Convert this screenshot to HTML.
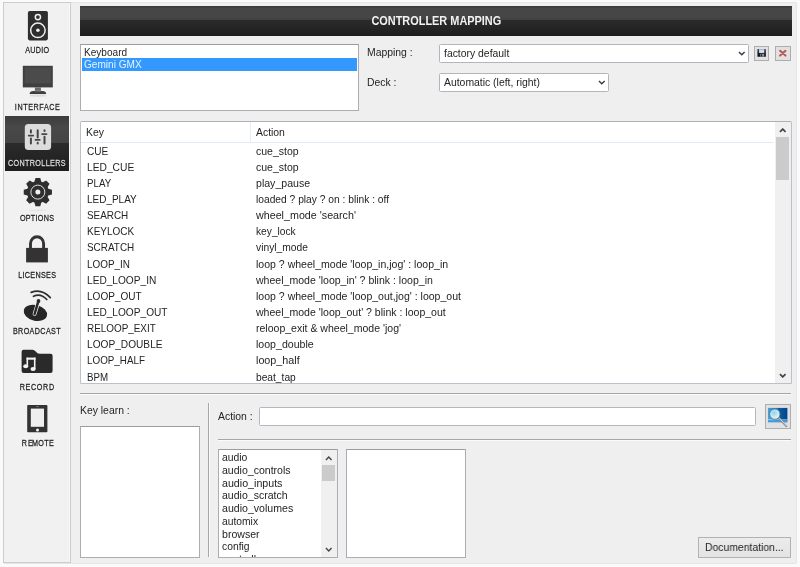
<!DOCTYPE html>
<html><head><meta charset="utf-8"><title>Controller Mapping</title>
<style>
html,body{margin:0;padding:0;}
body{width:800px;height:567px;overflow:hidden;background:#fafafa;font-family:"Liberation Sans",sans-serif;font-size:11px;color:#242424;position:relative;}
#frame{position:absolute;left:3px;top:1.5px;width:793.5px;height:562px;background:#efefef;border:1px solid #e5e5e5;border-radius:2px;box-sizing:border-box;}
#c{position:absolute;left:0;top:0;width:800px;height:567px;will-change:transform;}
#c > *{position:absolute;}
.t{display:inline-block;transform:scaleX(.945);transform-origin:0 50%;white-space:nowrap;}
#side{left:3px;top:1.5px;width:68.4px;height:561.2px;border:1.2px solid #c9ccd1;box-sizing:border-box;background:#f1f1f1;box-shadow:inset -1px 0 0 #f8f8f8;}
#side > *{position:absolute;}
#title{left:80px;top:6px;width:712px;height:29.5px;background:linear-gradient(#363636 0%,#474747 9%,#464646 36%,#404040 46%,#2b2b2b 48%,#232323 80%,#1d1d1d 100%);color:#f2f2f2;text-align:center;font-weight:bold;font-size:12px;line-height:31px;}
#title span{display:inline-block;transform:scaleX(.91);}
.box{background:#fff;border:1px solid #abadb3;border-top-color:#9a9ca3;box-sizing:border-box;overflow:hidden;}
.box > *{position:absolute;}
#devlist{left:80px;top:44px;width:278.6px;height:67.4px;}
.li{left:0.7px;right:0.7px;height:12.6px;line-height:12.6px;padding-left:2.5px;}
.li .t{transform:scaleX(.915);}
.li.sel{background:#3399ff;color:#eaf3ff;}
.lbl{line-height:13px;height:13px;}
.combo{background:#fff;border:1px solid #b2b5bd;border-radius:1.5px;box-sizing:border-box;line-height:17px;padding-left:4.2px;}
.combo .chev{position:absolute;right:2.2px;top:6.2px;width:7.6px;height:4.8px;}
.chev path{fill:none;stroke:#3c3c3c;stroke-width:1.5;}
#table{left:80px;top:120.7px;width:712px;height:263.4px;border-color:#bcc0c8;border-top-color:#adb1b9;border-radius:1.5px;}
#thead{left:0;top:0;right:17px;height:20.5px;border-bottom:1px solid #e2eaf5;background:#fff;}
.th{position:absolute;top:0;height:20.5px;line-height:21px;padding-left:5.2px;box-sizing:border-box;border-right:1px solid #e8eef6;}
.tr{left:0;right:17px;height:16px;line-height:16px;}
.tr .k{position:absolute;left:5.9px;transform:scaleX(.935);}
.tr .a{position:absolute;left:175.2px;}
.sb{position:absolute;width:15.8px;background:#f0f0f0;}
.sb .arr{position:absolute;left:4px;width:7.5px;height:5px;}
.arr path{fill:none;stroke:#444;stroke-width:1.8;}
.sb .thumb{position:absolute;left:1.1px;right:1.7px;background:#cbcbcb;}
.hr{height:0;border-top:1px solid #a6a6a6;border-bottom:1px solid #fbfbfb;}
.vr{width:0;border-left:1px solid #a6a6a6;border-right:1px solid #fbfbfb;}
#cats .ci{left:3px;height:12.7px;line-height:12.7px;}
#cats .t{transform:scaleX(.962);}
#cats .arr path{stroke-width:1.5;}
#doc{left:698px;top:537px;width:93px;height:20.5px;box-sizing:border-box;border:1px solid #b2b2b2;background:linear-gradient(#ececec,#e3e3e3);line-height:18.5px;padding-left:5.8px;}
#selblk{left:5px;top:115.5px;width:64.3px;height:55.5px;background:linear-gradient(#3c3c3c 0%,#484848 20%,#444 49%,#2b2b2b 50%,#1e1e1e 100%);}
#icons{left:0;top:0;}
.sbtn{box-sizing:border-box;border:1px solid #adadad;background:#e1e1e1;overflow:hidden;}

</style></head>
<body>
<div id="frame"></div>
<div id="c">
<div id="side"></div>
<div id="selblk"></div>
<svg id="icons" width="76" height="567" viewBox="0 0 76 567">
<!-- AUDIO speaker -->
<rect x="27.9" y="11" width="20" height="29.4" rx="1.8" fill="#2e2e2e"/>
<circle cx="37.9" cy="17.1" r="2.6" fill="#2e2e2e" stroke="#f0f0f0" stroke-width="1.5"/>
<circle cx="37.9" cy="30.3" r="7.25" fill="#2e2e2e" stroke="#f0f0f0" stroke-width="1.5"/>
<circle cx="37.9" cy="30.3" r="1.8" fill="#f0f0f0"/>
<!-- INTERFACE monitor -->
<rect x="22.8" y="65.8" width="30" height="21.6" fill="#3f3f3f"/>
<rect x="24.6" y="67.4" width="26.4" height="16" fill="#4b4b4b"/>
<rect x="34.9" y="87.4" width="6" height="4" fill="#6a6a6a"/>
<path d="M29.6 94 Q29.6 90.9 33.5 90.9 L42.3 90.9 Q46.2 90.9 46.2 94 Z" fill="#3f3f3f"/>
<rect x="34.9" y="90" width="6" height="1.6" fill="#777"/>
<path d="M30 94.6 h16 v1.6 q-8 1.2 -16 0 z" fill="#d4d4d4" opacity=".7"/>
<!-- CONTROLLERS -->
<rect x="24.8" y="124.1" width="26.3" height="26" rx="3.6" fill="#dcdcdc"/>
<g stroke="#454545" stroke-linecap="round" fill="none">
<path d="M30.9 130.3 V132.6 M30.9 138.4 V143.4 M37.7 130.3 V137.4 M37.7 142.7 V143.4 M44.5 130.3 V130.9 M44.5 136.8 V143.4" stroke-width="2"/>
<path d="M28.7 135.6 H33.2 M35.5 139.9 H39.7 M42.1 134.1 H46.5" stroke-width="1.8"/>
</g>
<!-- OPTIONS gear -->
<g transform="translate(37.85 192.1)" fill="#2f2f2f">
<circle r="10.9"/>
<g transform="rotate(0)"><path d="M-3.7 -9.5 L-2.4 -14.1 L2.4 -14.1 L3.7 -9.5 Z"/></g><g transform="rotate(45)"><path d="M-3.7 -9.5 L-2.4 -14.1 L2.4 -14.1 L3.7 -9.5 Z"/></g><g transform="rotate(90)"><path d="M-3.7 -9.5 L-2.4 -14.1 L2.4 -14.1 L3.7 -9.5 Z"/></g><g transform="rotate(135)"><path d="M-3.7 -9.5 L-2.4 -14.1 L2.4 -14.1 L3.7 -9.5 Z"/></g><g transform="rotate(180)"><path d="M-3.7 -9.5 L-2.4 -14.1 L2.4 -14.1 L3.7 -9.5 Z"/></g><g transform="rotate(225)"><path d="M-3.7 -9.5 L-2.4 -14.1 L2.4 -14.1 L3.7 -9.5 Z"/></g><g transform="rotate(270)"><path d="M-3.7 -9.5 L-2.4 -14.1 L2.4 -14.1 L3.7 -9.5 Z"/></g><g transform="rotate(315)"><path d="M-3.7 -9.5 L-2.4 -14.1 L2.4 -14.1 L3.7 -9.5 Z"/></g>
<circle r="7" fill="none" stroke="#f0f0f0" stroke-width=".9"/>
<circle r="2.5" fill="#f0f0f0"/>
</g>
<ellipse cx="37.9" cy="210.3" rx="9" ry="1.1" fill="#dcdcdc" opacity=".55"/>
<!-- LICENSES lock -->
<rect x="26.1" y="247.9" width="21.8" height="14.5" fill="#353233"/>
<path d="M30.5 248.5 V243.5 A6.55 6.8 0 0 1 43.6 243.5 V248.5" fill="none" stroke="#353233" stroke-width="2.9"/>
<!-- BROADCAST -->
<ellipse cx="35.4" cy="312.9" rx="11.9" ry="7.8" transform="rotate(14 35.4 312.9)" fill="#262626"/>
<path d="M34.6 314 L38.4 301.6" stroke="#f0f0f0" stroke-width="3.9" stroke-linecap="round"/>
<path d="M34.6 314 L38.4 301.2" stroke="#2b2b2b" stroke-width="2.5" stroke-linecap="round"/>
<circle cx="38.5" cy="301" r="1.9" fill="#2b2b2b"/>
<path d="M31.2 292.4 Q41.5 288.4 50.3 297.6" fill="none" stroke="#2e2e2e" stroke-width="1.7" stroke-linecap="round"/>
<path d="M33.5 296.3 Q40.5 292.8 46.8 299.5" fill="none" stroke="#2e2e2e" stroke-width="1.7" stroke-linecap="round"/>
<!-- RECORD folder -->
<path d="M23.6 349.7 H32.6 Q34 349.7 35.5 351.3 Q37.5 353.8 39.5 353.8 H50.6 Q52.6 353.8 52.6 355.8 V371.1 Q52.6 373.1 50.6 373.1 H23.6 Q21.6 373.1 21.6 371.1 V351.7 Q21.6 349.7 23.6 349.7 Z" fill="#2a2a2a"/>
<g fill="#f4f4f4">
<rect x="26.6" y="357.6" width="8.9" height="2.1"/>
<rect x="26.5" y="357.6" width="1.6" height="8.6"/>
<rect x="33.9" y="357.6" width="1.6" height="11.4"/>
<ellipse cx="25.7" cy="366.3" rx="2.5" ry="2"/>
<ellipse cx="33.1" cy="368.9" rx="2.6" ry="2"/>
</g>
<!-- REMOTE phone -->
<rect x="27.2" y="405.1" width="20.2" height="27.2" rx=".8" fill="#333"/>
<rect x="30.8" y="408.6" width="13.2" height="18.2" fill="#efefef"/>
<circle cx="37.5" cy="430.1" r="1.5" fill="#f4f4f4"/>
<rect x="36" y="406.4" width="3" height=".7" fill="#888"/>
<!-- labels -->
<g font-family="Liberation Sans, sans-serif" font-size="7.2" font-weight="normal" stroke-width=".22">
<text transform="translate(25.30 54.20) scale(1 1.17)" textLength="23.7" lengthAdjust="spacing" fill="#ffffff" stroke="#ffffff">AUDIO</text>
<text transform="translate(14.85 110.40) scale(1 1.17)" textLength="45" lengthAdjust="spacing" fill="#ffffff" stroke="#ffffff">INTERFACE</text>
<text transform="translate(19.90 222.20) scale(1 1.17)" textLength="34.1" lengthAdjust="spacing" fill="#ffffff" stroke="#ffffff">OPTIONS</text>
<text transform="translate(18.20 278.70) scale(1 1.17)" textLength="37.8" lengthAdjust="spacing" fill="#ffffff" stroke="#ffffff">LICENSES</text>
<text transform="translate(12.90 334.30) scale(1 1.17)" textLength="47.8" lengthAdjust="spacing" fill="#ffffff" stroke="#ffffff">BROADCAST</text>
<text transform="translate(19.80 390.30) scale(1 1.17)" textLength="34.3" lengthAdjust="spacing" fill="#ffffff" stroke="#ffffff">RECORD</text>
<text transform="translate(21.70 446.30) scale(1 1.17)" fill="#ffffff" stroke="#ffffff">R</text>
<text transform="translate(28.00 446.30) scale(1 1.17)" fill="#ffffff" stroke="#ffffff">E</text>
<text transform="translate(31.90 446.30) scale(1 1.17)" textLength="21.9" lengthAdjust="spacing" fill="#ffffff" stroke="#ffffff">MOTE</text>
<text transform="translate(25.30 53.40) scale(1 1.17)" textLength="23.7" lengthAdjust="spacing" fill="#222222" stroke="#222222">AUDIO</text>
<text transform="translate(14.85 109.60) scale(1 1.17)" textLength="45" lengthAdjust="spacing" fill="#222222" stroke="#222222">INTERFACE</text>
<text transform="translate(19.90 221.40) scale(1 1.17)" textLength="34.1" lengthAdjust="spacing" fill="#222222" stroke="#222222">OPTIONS</text>
<text transform="translate(18.20 277.90) scale(1 1.17)" textLength="37.8" lengthAdjust="spacing" fill="#222222" stroke="#222222">LICENSES</text>
<text transform="translate(12.90 333.50) scale(1 1.17)" textLength="47.8" lengthAdjust="spacing" fill="#222222" stroke="#222222">BROADCAST</text>
<text transform="translate(19.80 389.50) scale(1 1.17)" textLength="34.3" lengthAdjust="spacing" fill="#222222" stroke="#222222">RECORD</text>
<text transform="translate(21.70 445.50) scale(1 1.17)" fill="#222222" stroke="#222222">R</text>
<text transform="translate(28.00 445.50) scale(1 1.17)" fill="#222222" stroke="#222222">E</text>
<text transform="translate(31.90 445.50) scale(1 1.17)" textLength="21.9" lengthAdjust="spacing" fill="#222222" stroke="#222222">MOTE</text>
<text transform="translate(7.90 166.50) scale(1 1.17)" textLength="57.7" lengthAdjust="spacing" fill="#101010" stroke="#101010">CONTROLLERS</text>
<text transform="translate(7.90 165.80) scale(1 1.17)" textLength="57.7" lengthAdjust="spacing" fill="#dcdcdc" stroke="#dcdcdc">CONTROLLERS</text>
</g>
</svg>
<div id="title"><span>CONTROLLER MAPPING</span></div>
<div id="devlist" class="box"><div class="li" style="top:0.8px"><span class="t">Keyboard</span></div><div class="li sel" style="top:13.1px"><span class="t">Gemini GMX</span></div></div>
<div class="lbl" style="left:367px;top:45.5px"><span class="t">Mapping :</span></div>
<div class="combo" style="left:439.3px;top:44.2px;width:309.6px;height:19.1px"><span class="t">factory default</span><svg class="chev" viewBox="0 0 8 5"><path d="M1 1 L4 4 L7 1" /></svg></div>
<div class="lbl" style="left:367px;top:75.5px"><span class="t">Deck :</span></div>
<div class="combo" style="left:439.3px;top:73.2px;width:169.4px;height:19.2px"><span class="t">Automatic (left, right)</span><svg class="chev" viewBox="0 0 8 5"><path d="M1 1 L4 4 L7 1" /></svg></div>
<div class="sbtn" style="left:754.1px;top:46.1px;width:15px;height:14.7px">
<svg width="15" height="14.7" viewBox="754.1 46.1 15 14.7" style="position:absolute;left:-1px;top:-1px">
<defs><linearGradient id="fl" x1="0" y1="0" x2="0" y2="1"><stop offset="0" stop-color="#4a5263"/><stop offset=".55" stop-color="#1c2130"/><stop offset="1" stop-color="#0e1016"/></linearGradient></defs>
<rect x="757.5" y="49" width="8.5" height="7.8" rx=".5" fill="url(#fl)"/>
<rect x="759.2" y="49.3" width="5.1" height="3.7" fill="#dde5f2"/>
<rect x="759.2" y="49.3" width="5.1" height="1.2" fill="#aebbd2"/>
<rect x="760.3" y="53.9" width="4" height="2.9" fill="#8b8f97"/>
<rect x="761" y="54.4" width="1.2" height="2" fill="#20242e"/>
</svg></div>
<div class="sbtn" style="left:775.2px;top:46.1px;width:15.6px;height:14.7px">
<svg width="15.6" height="14.7" viewBox="775.2 46.1 15.6 14.7" style="position:absolute;left:-1px;top:-1px">
<path d="M780.3 50.9 L785.7 55.7 M785.7 50.9 L780.3 55.7" stroke="#b95552" stroke-width="2" stroke-linecap="round" fill="none"/>
</svg></div>
<div id="table" class="box">
<div id="thead"><div class="th" style="left:0;width:170px"><span class="t">Key</span></div><div class="th" style="left:170px;width:524px;border-right:none"><span class="t">Action</span></div></div>
<div class="tr" style="top:20.85px"><span class="t k" style="transform:scaleX(0.915)">CUE</span><span class="t a" style="transform:scaleX(0.956)">cue_stop</span></div>
<div class="tr" style="top:37.00px"><span class="t k" style="transform:scaleX(0.931)">LED_CUE</span><span class="t a" style="transform:scaleX(0.956)">cue_stop</span></div>
<div class="tr" style="top:53.15px"><span class="t k" style="transform:scaleX(0.885)">PLAY</span><span class="t a" style="transform:scaleX(0.961)">play_pause</span></div>
<div class="tr" style="top:69.30px"><span class="t k" style="transform:scaleX(0.907)">LED_PLAY</span><span class="t a" style="transform:scaleX(0.931)">loaded ? play ? on : blink : off</span></div>
<div class="tr" style="top:85.45px"><span class="t k" style="transform:scaleX(0.900)">SEARCH</span><span class="t a" style="transform:scaleX(0.974)">wheel_mode 'search'</span></div>
<div class="tr" style="top:101.60px"><span class="t k" style="transform:scaleX(0.909)">KEYLOCK</span><span class="t a" style="transform:scaleX(0.928)">key_lock</span></div>
<div class="tr" style="top:117.75px"><span class="t k" style="transform:scaleX(0.902)">SCRATCH</span><span class="t a" style="transform:scaleX(0.935)">vinyl_mode</span></div>
<div class="tr" style="top:133.90px"><span class="t k" style="transform:scaleX(0.902)">LOOP_IN</span><span class="t a" style="transform:scaleX(0.958)">loop ? wheel_mode 'loop_in,jog' : loop_in</span></div>
<div class="tr" style="top:150.05px"><span class="t k" style="transform:scaleX(0.921)">LED_LOOP_IN</span><span class="t a" style="transform:scaleX(0.958)">wheel_mode 'loop_in' ? blink : loop_in</span></div>
<div class="tr" style="top:166.20px"><span class="t k" style="transform:scaleX(0.914)">LOOP_OUT</span><span class="t a" style="transform:scaleX(0.958)">loop ? wheel_mode 'loop_out,jog' : loop_out</span></div>
<div class="tr" style="top:182.35px"><span class="t k" style="transform:scaleX(0.921)">LED_LOOP_OUT</span><span class="t a" style="transform:scaleX(0.958)">wheel_mode 'loop_out' ? blink : loop_out</span></div>
<div class="tr" style="top:198.50px"><span class="t k" style="transform:scaleX(0.900)">RELOOP_EXIT</span><span class="t a" style="transform:scaleX(0.957)">reloop_exit &amp; wheel_mode 'jog'</span></div>
<div class="tr" style="top:214.65px"><span class="t k" style="transform:scaleX(0.922)">LOOP_DOUBLE</span><span class="t a" style="transform:scaleX(0.962)">loop_double</span></div>
<div class="tr" style="top:230.80px"><span class="t k" style="transform:scaleX(0.895)">LOOP_HALF</span><span class="t a" style="transform:scaleX(0.978)">loop_half</span></div>
<div class="tr" style="top:246.95px"><span class="t k" style="transform:scaleX(0.885)">BPM</span><span class="t a" style="transform:scaleX(0.928)">beat_tap</span></div>
<div class="sb" style="right:0;top:0;bottom:0"><svg class="arr" style="top:6px" viewBox="0 0 8 5"><path d="M1 4 L4 1 L7 4"/></svg><div class="thumb" style="top:15.6px;height:42.7px"></div><svg class="arr" style="bottom:5px" viewBox="0 0 8 5"><path d="M1 1 L4 4 L7 1"/></svg></div>
</div>
<div class="hr" style="left:80px;top:392.9px;width:711px"></div>
<div class="lbl" style="left:80px;top:403.8px"><span class="t">Key learn :</span></div>
<div class="box" style="left:80px;top:425.5px;width:120px;height:132.3px"></div>
<div class="vr" style="left:207.5px;top:403px;height:154px"></div>
<div class="lbl" style="left:218px;top:409.5px"><span class="t">Action :</span></div>
<div class="box" style="left:259px;top:406.6px;width:496.8px;height:19px;border-color:#b4b7bf;border-radius:1.5px"></div>
<div class="sbtn" style="left:765.1px;top:404.1px;width:25.8px;height:24.9px">
<svg width="25.8" height="24.9" viewBox="765.1 404.1 25.8 24.9" style="position:absolute;left:-1px;top:-1px">
<defs>
<linearGradient id="gb" x1="0" y1="0" x2="1" y2="0"><stop offset="0" stop-color="#46a4de"/><stop offset=".5" stop-color="#1b79c4"/><stop offset="1" stop-color="#044a96"/></linearGradient>
<radialGradient id="gl" cx=".4" cy=".35" r=".75"><stop offset="0" stop-color="#8fd4f2"/><stop offset=".6" stop-color="#c9ebfa"/><stop offset="1" stop-color="#ffffff"/></radialGradient>
</defs>
<rect x="768.1" y="408" width="19.3" height="14.3" fill="url(#gb)"/>
<path d="M778 408 L787.4 408 L787.4 420 L781 420 Z" fill="#03407f" opacity=".45"/>
<rect x="768.1" y="419.6" width="19.3" height=".8" fill="#d6ecfb"/>
<rect x="768.1" y="420.4" width="19.3" height="1.9" fill="#3f9ce0"/>
<path d="M779 418.2 L786.4 426.3" stroke="#8a8a8a" stroke-width="2" stroke-linecap="round"/>
<path d="M779.3 418 L786.6 426" stroke="#e4e4e4" stroke-width=".8" stroke-linecap="round"/>
<circle cx="774.9" cy="414.2" r="5.2" fill="url(#gl)" stroke="#6d7378" stroke-width=".9"/>
</svg></div>
<div class="hr" style="left:218px;top:438.5px;width:573px"></div>
<div class="box" id="cats" style="left:218px;top:449px;width:120px;height:108.7px">
<div class="ci" style="top:1.20px"><span class="t" style="transform:scaleX(0.942)">audio</span></div>
<div class="ci" style="top:13.92px"><span class="t" style="transform:scaleX(0.958)">audio_controls</span></div>
<div class="ci" style="top:26.64px"><span class="t" style="transform:scaleX(0.969)">audio_inputs</span></div>
<div class="ci" style="top:39.36px"><span class="t" style="transform:scaleX(0.958)">audio_scratch</span></div>
<div class="ci" style="top:52.08px"><span class="t" style="transform:scaleX(0.963)">audio_volumes</span></div>
<div class="ci" style="top:64.80px"><span class="t" style="transform:scaleX(0.936)">automix</span></div>
<div class="ci" style="top:77.52px"><span class="t" style="transform:scaleX(0.962)">browser</span></div>
<div class="ci" style="top:90.24px"><span class="t" style="transform:scaleX(0.938)">config</span></div>
<div class="ci" style="top:102.96px"><span class="t" style="transform:scaleX(0.958)">controllers</span></div>
<div class="sb" style="right:0;top:0;bottom:0"><svg class="arr" style="top:6px" viewBox="0 0 8 5"><path d="M1 4 L4 1 L7 4"/></svg><div class="thumb" style="top:15.3px;height:16.2px"></div><svg class="arr" style="bottom:5px" viewBox="0 0 8 5"><path d="M1 1 L4 4 L7 1"/></svg></div>
</div>
<div class="box" style="left:346px;top:449px;width:120px;height:108.7px"></div>
<div id="doc"><span class="t">Documentation...</span></div>
</div>
</body></html>
